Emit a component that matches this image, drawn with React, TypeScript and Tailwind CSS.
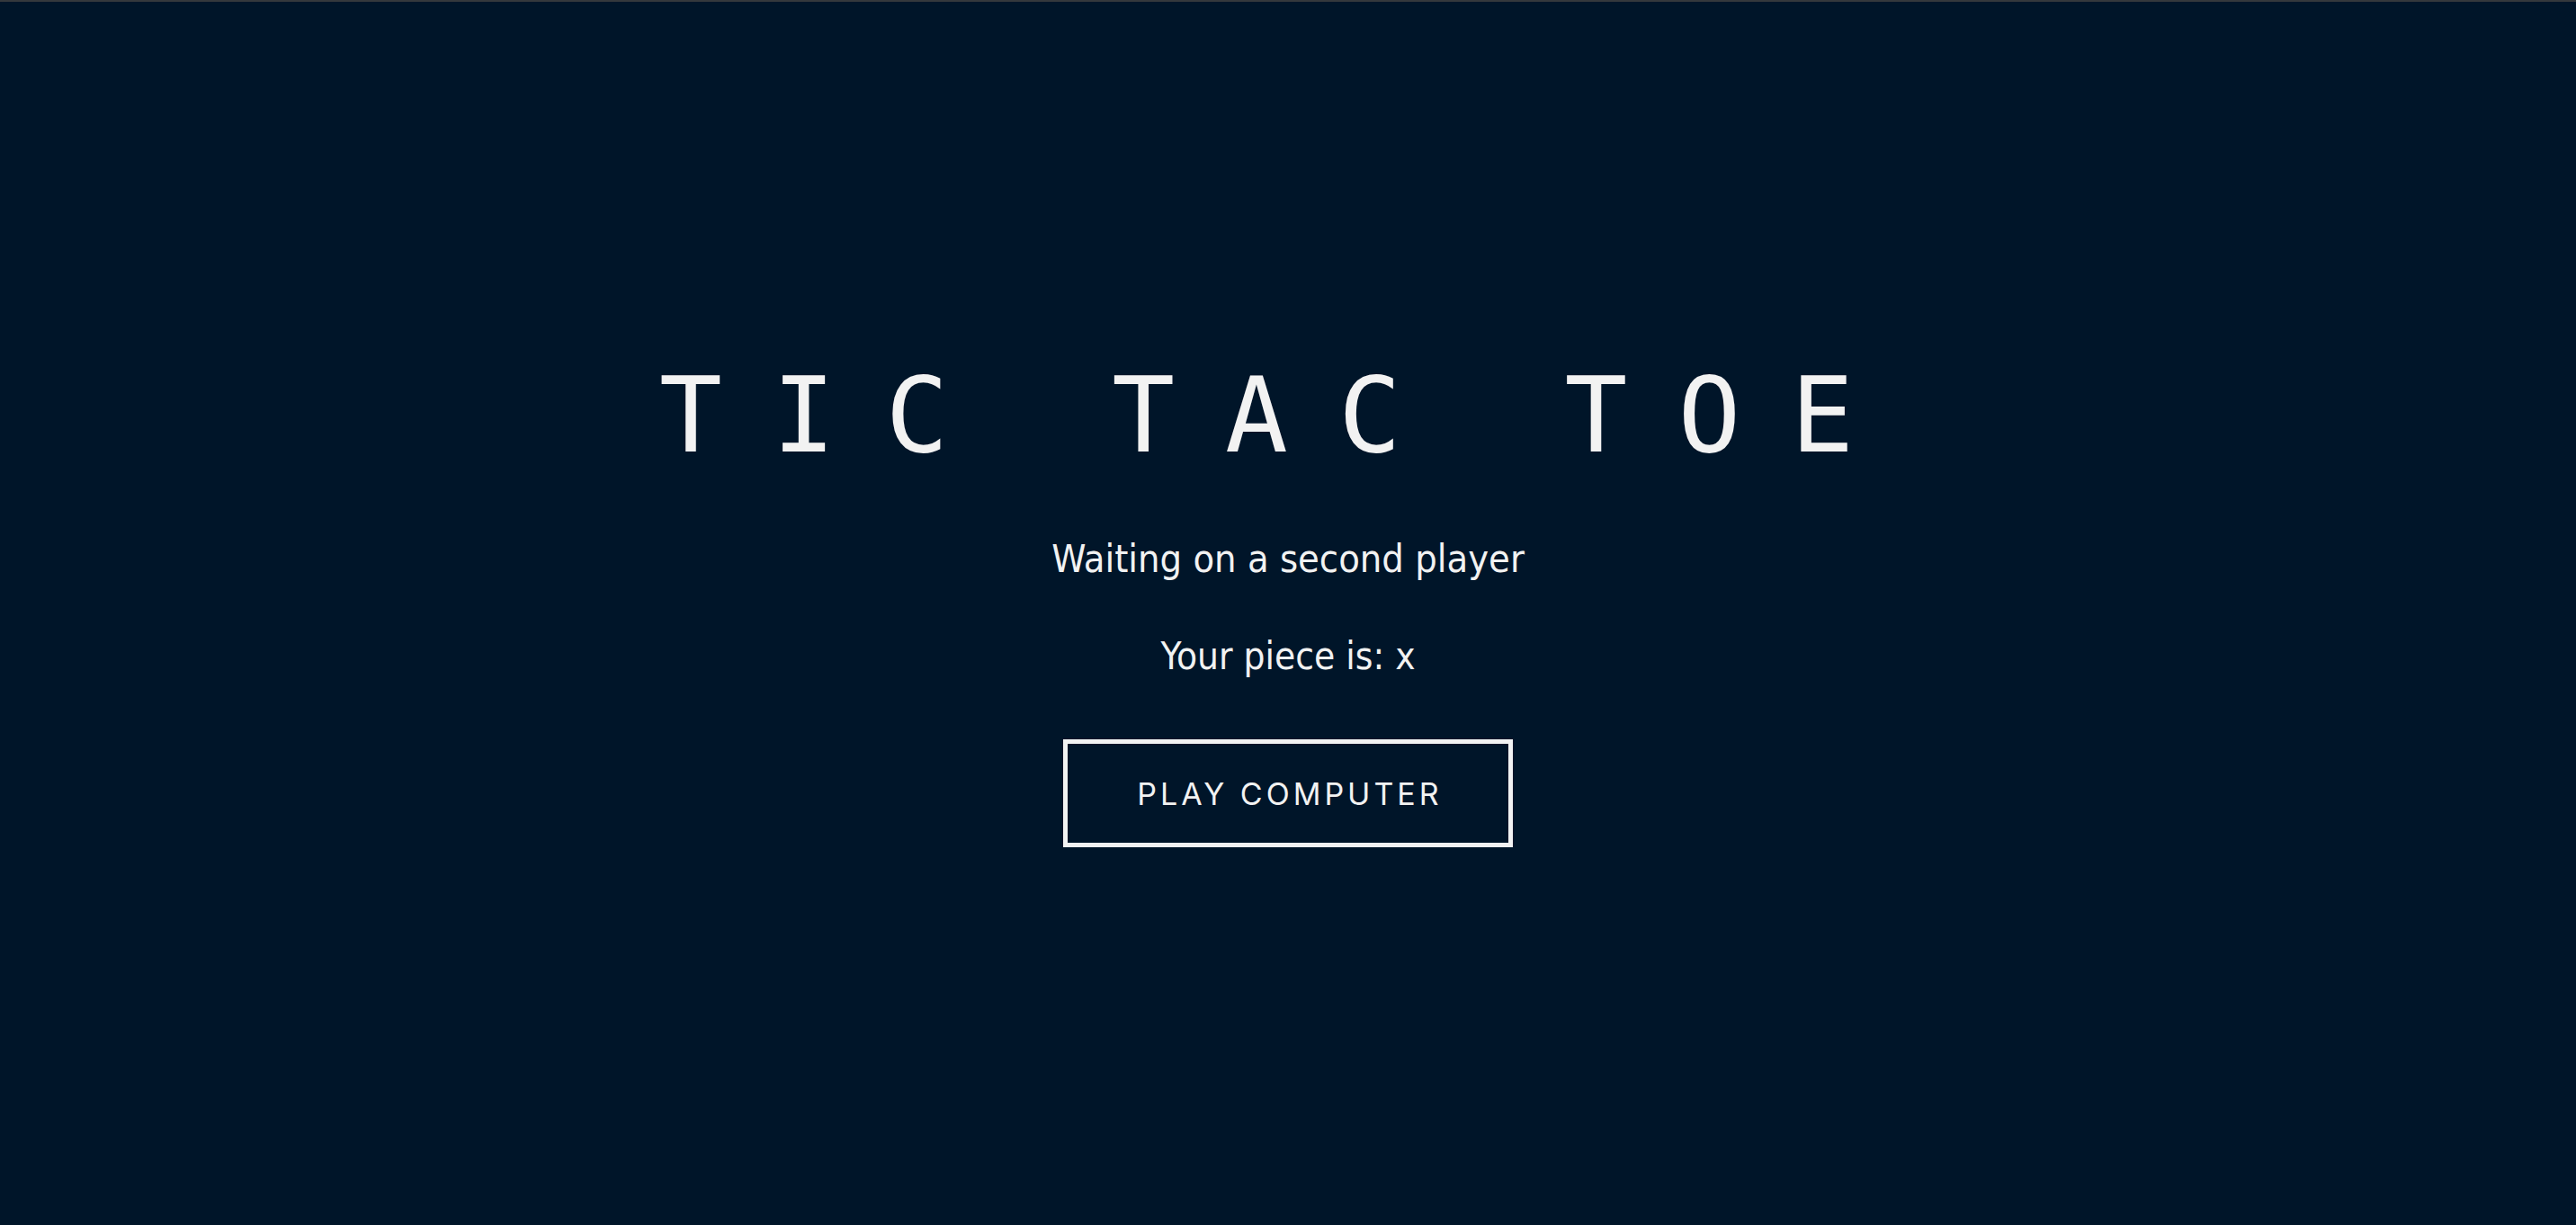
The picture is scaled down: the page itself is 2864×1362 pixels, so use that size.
import React from "react";

export default function App() {
  return (
    <div className="min-h-[1362px] w-full bg-[#001529] border-t-2 border-[#34383c] flex flex-col items-center pt-[402px] text-[#f2f2f2]">
      <h1 className="font-['DejaVu_Sans_Mono','Liberation_Mono',monospace] text-[116px] leading-[116px] tracking-[56px] pr-[14px] font-normal">
        TIC TAC TOE
      </h1>
      <h2 className="mt-[80px] font-['DejaVu_Sans','Liberation_Sans',sans-serif] font-stretch-condensed text-[43px] leading-[43px] font-normal">
        Waiting on a second player
      </h2>
      <h3 className="mt-[66px] font-['DejaVu_Sans','Liberation_Sans',sans-serif] font-stretch-condensed text-[42px] leading-[42px] font-normal">
        Your piece is: x
      </h3>
      <button className="mt-[71px] w-[500px] h-[120px] border-[5px] border-[#f2f2f2] bg-transparent font-['Inter','Liberation_Sans',sans-serif] text-[34px] tracking-[4px] pl-[4px] text-[#f2f2f2] flex items-center justify-center">
        PLAY COMPUTER
      </button>
    </div>
  );
}
